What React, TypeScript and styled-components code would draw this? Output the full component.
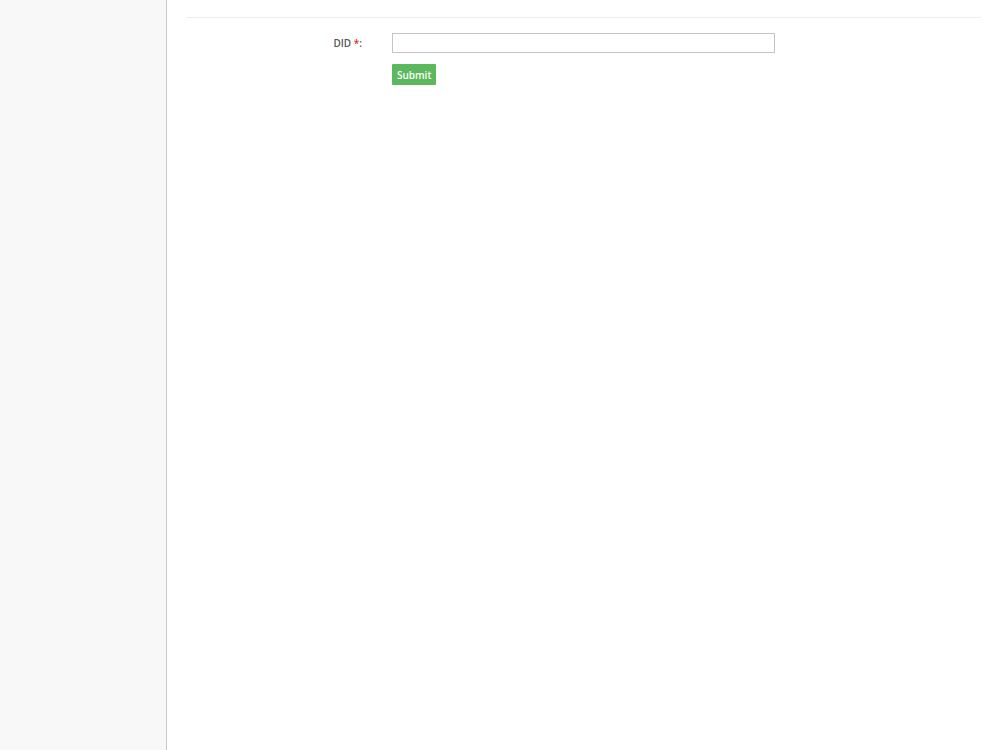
import styled, { createGlobalStyle } from 'styled-components';

const GlobalStyle = createGlobalStyle`
  html, body {
    margin: 0;
    padding: 0;
    background: #ffffff;
    font-family: 'Open Sans', 'Liberation Sans', sans-serif;
  }
`;

const App = () => {
  return (
    <>
      <GlobalStyle />
      <Layout>
        <Sidebar />
        <Main>
          <Divider />
          <Form onSubmit={(e) => e.preventDefault()}>
            <FormRow>
              <Label htmlFor="did">
                DID <Required>*</Required>:
              </Label>
              <Field>
                <TextInput id="did" type="text" />
              </Field>
            </FormRow>
            <FormRow>
              <Spacer />
              <Field>
                <SubmitButton type="submit">Submit</SubmitButton>
              </Field>
            </FormRow>
          </Form>
        </Main>
      </Layout>
    </>
  );
};

export default App;

const Layout = styled.div`
  display: flex;
  min-height: 750px;
`;

const Sidebar = styled.aside`
  width: 166px;
  flex-shrink: 0;
  background-color: #f8f8f8;
  border-right: 1px solid #c8c8c8;
`;

const Main = styled.main`
  flex: 1;
  padding: 0 19px 0 19px;
`;

const Divider = styled.hr`
  margin: 17px 0 0;
  border: 0;
  border-top: 1px solid #eeeeee;
`;

const Form = styled.form`
  display: flex;
  flex-direction: column;
  gap: 11px;
  padding-top: 15px;
`;

const FormRow = styled.div`
  display: flex;
  align-items: center;
`;

const Label = styled.label`
  width: 176px;
  box-sizing: border-box;
  text-align: right;
  font-size: 10px;
  font-weight: 600;
  color: #555555;
`;

const Spacer = styled.div`
  width: 176px;
`;

const Required = styled.span`
  color: #e02b27;
`;

const Field = styled.div`
  margin-left: 30px;
`;

const TextInput = styled.input`
  display: block;
  width: 383px;
  height: 20px;
  box-sizing: border-box;
  border: 1px solid #c4c4c4;
  padding: 2px 5px;
  font-size: 11px;
  font-family: inherit;
`;

const SubmitButton = styled.button`
  display: block;
  height: 21px;
  padding: 0 5px;
  border: 0;
  border-radius: 1px;
  background-color: #5cb85c;
  color: #ffffff;
  font-family: inherit;
  font-size: 10px;
  font-weight: 600;
  cursor: pointer;
`;
